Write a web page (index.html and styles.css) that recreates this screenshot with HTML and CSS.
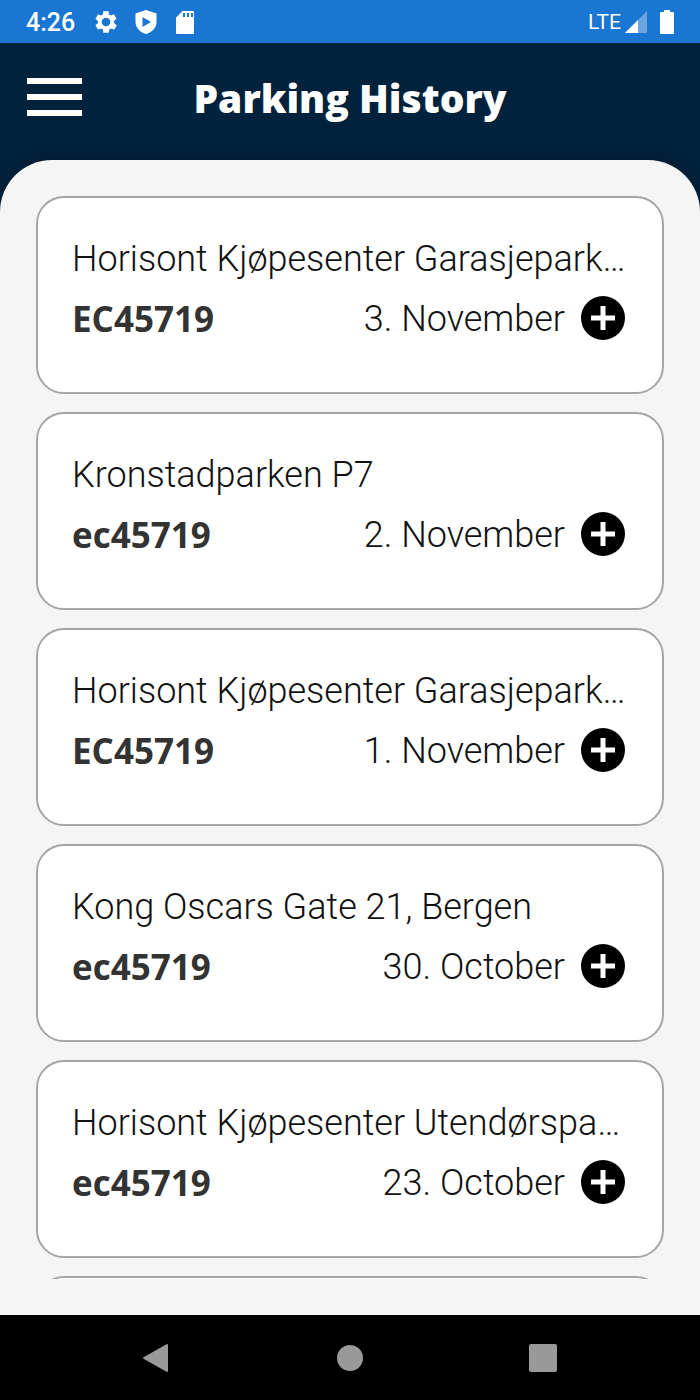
FILE: index.html
```html
<!DOCTYPE html>
<html lang="en">
<head>
  <meta charset="UTF-8">
  <meta name="viewport" content="width=device-width, initial-scale=1">
  <title>Parking History</title>
  <link rel="stylesheet" href="styles.css">
</head>
<body>

  <div class="statusbar">
    <span class="clock">4:26</span>
    <svg class="status-icon" viewBox="1 0 22 24"><path d="M19.4 13a7.500 7.500 0 0 0 0-2l2.100-1.700c.2-.1.2-.4.1-.6l-2-3.500c-.1-.2-.4-.3-.6-.2l-2.500 1a7.300 7.300 0 0 0-1.700-1l-.4-2.600c0-.3-.2-.4-.5-.4h-4c-.2 0-.4.200-.5.400L9.200 5a7.700 7.700 0 0 0-1.700 1L5 5c-.2-.1-.5 0-.6.200l-2 3.500c-.1.200-.1.500.1.600L4.600 11a8 8 0 0 0 0 2l-2.100 1.700c-.2.100-.2.400-.1.600l2 3.500c.1.200.4.300.6.200l2.500-1c.5.400 1.100.7 1.700 1l.4 2.600c0 .3.200.4.500.4h4c.2 0 .4-.200.5-.400l.4-2.600a7.300 7.300 0 0 0 1.700-1l2.500 1c.2.100.5 0 .6-.200l2-3.500c.1-.2.1-.5-.1-.6L19.400 13zM12 16a4 4 0 1 1 0-8 4 4 0 0 1 0 8z" fill="#fff"/></svg>
    <svg class="status-icon" viewBox="0 0 24 26"><path d="M12 1L1.500 4.500V13c0 5.500 4.500 10.300 10.500 12 6-1.700 10.500-6.500 10.500-12V4.500z" fill="#fff"/><path d="M8.500 8v10l8.500-5z" fill="#1976d2"/></svg>
    <svg class="status-icon" viewBox="0 0 24 26"><path d="M8.500 2H19a1 1 0 0 1 1 1v21a1 1 0 0 1-1 1H3a1 1 0 0 1-1-1V8.500z" fill="#fff"/><path d="M9 4h2v4H9zM13 4h2v4h-2zM17 4h2v4h-2z" fill="#1976d2"/></svg>
    <span class="network">LTE</span>
    <svg class="signal-icon" viewBox="0 0 22 22"><path d="M22 0v22H0z" fill="#69a5e1"/><path d="M13 9v13H0z" fill="#fff"/></svg>
    <svg class="battery-icon" viewBox="0 0 14 24"><path d="M4 0h6v2h3a1 1 0 0 1 1 1v20a1 1 0 0 1-1 1H1a1 1 0 0 1-1-1V3a1 1 0 0 1 1-1h3z" fill="#fff"/></svg>
  </div>

  <header>
    <button class="menu" aria-label="Menu"><span></span><span></span><span></span></button>
    <h1>Parking History</h1>
  </header>

  <main>
    <ul class="history">
      <li class="card">
        <h2>Horisont Kjøpesenter Garasjepark…</h2>
        <div class="details">
          <strong>EC45719</strong>
          <span>3. November</span>
          <button class="more" aria-label="Show details"><svg viewBox="0 0 44 44"><circle cx="22" cy="22" r="22"/><path d="M22 10v24M10 22h24"/></svg></button>
        </div>
      </li>
      <li class="card">
        <h2>Kronstadparken P7</h2>
        <div class="details">
          <strong>ec45719</strong>
          <span>2. November</span>
          <button class="more" aria-label="Show details"><svg viewBox="0 0 44 44"><circle cx="22" cy="22" r="22"/><path d="M22 10v24M10 22h24"/></svg></button>
        </div>
      </li>
      <li class="card">
        <h2>Horisont Kjøpesenter Garasjepark…</h2>
        <div class="details">
          <strong>EC45719</strong>
          <span>1. November</span>
          <button class="more" aria-label="Show details"><svg viewBox="0 0 44 44"><circle cx="22" cy="22" r="22"/><path d="M22 10v24M10 22h24"/></svg></button>
        </div>
      </li>
      <li class="card">
        <h2>Kong Oscars Gate 21, Bergen</h2>
        <div class="details">
          <strong>ec45719</strong>
          <span>30. October</span>
          <button class="more" aria-label="Show details"><svg viewBox="0 0 44 44"><circle cx="22" cy="22" r="22"/><path d="M22 10v24M10 22h24"/></svg></button>
        </div>
      </li>
      <li class="card">
        <h2>Horisont Kjøpesenter Utendørspa…</h2>
        <div class="details">
          <strong>ec45719</strong>
          <span>23. October</span>
          <button class="more" aria-label="Show details"><svg viewBox="0 0 44 44"><circle cx="22" cy="22" r="22"/><path d="M22 10v24M10 22h24"/></svg></button>
        </div>
      </li>
      <li class="card"></li>
    </ul>
  </main>

  <nav class="navbar">
    <button aria-label="Back"><svg viewBox="0 0 28 30"><path d="M24 2v26L1 15z" stroke="#999" stroke-width="2" stroke-linejoin="round"/></svg></button>
    <button aria-label="Home"><svg viewBox="0 0 28 30"><circle cx="14" cy="15" r="13"/></svg></button>
    <button aria-label="Recent apps"><svg viewBox="0 0 28 30"><rect y="1" width="28" height="28" rx="2"/></svg></button>
  </nav>

</body>
</html>
```

FILE: styles.css
```css
body {
  margin: 0;
  height: 100vh;
  display: flex;
  flex-direction: column;
  background: #00223d;
  font-family: Roboto, sans-serif;
  color: #111;
}

button {
  border: 0;
  padding: 0;
  background: none;
  cursor: pointer;
}

svg {
  display: block;
}

.statusbar {
  flex: none;
  display: flex;
  align-items: center;
  height: 43px;
  padding: 0 26px;
  box-sizing: border-box;
  background: #1976d2;
  color: #fff;
}

.clock {
  font-size: 25px;
  font-weight: 500;
  line-height: 26px;
  padding-top: 2px;
  margin-right: 3px;
}

.status-icon {
  width: 24px;
  height: 26px;
  margin-left: 16px;
}

.network {
  margin-left: auto;
  font-size: 21px;
}

.signal-icon {
  width: 22px;
  height: 22px;
  margin: 0 13px 0 4px;
}

.battery-icon {
  width: 14px;
  height: 24px;
}

header {
  flex: none;
  display: grid;
  grid-template-columns: 56px 1fr 56px;
  align-items: center;
  height: 117px;
  padding: 0 26px 9px;
  box-sizing: border-box;
}

.menu {
  display: flex;
  flex-direction: column;
  gap: 10px;
}

.menu span {
  width: 55px;
  height: 6px;
  margin-left: 1px;
  background: #fff;
}

h1 {
  margin: 0;
  text-align: center;
  color: #fff;
  font-family: "Open Sans", sans-serif;
  font-size: 39px;
  font-weight: 800;
}

main {
  flex: 1;
  min-height: 0;
  display: flex;
  padding: 36px;
  background: #f5f5f5;
  border-radius: 52px 52px 0 0;
  box-shadow: 0 0 16px rgba(0, 0, 0, 0.3);
}

.history {
  flex: 1;
  min-width: 0;
  display: flex;
  flex-direction: column;
  gap: 18px;
  margin: 0;
  padding: 0;
  list-style: none;
  overflow: hidden;
}

.card {
  flex: none;
  min-height: 198px;
  padding: 37px 37px 0 34px;
  box-sizing: border-box;
  background: #fff;
  border: 2px solid #a3a8a6;
  border-radius: 28px;
}

h2 {
  margin: 0;
  font-size: 36px;
  font-weight: 300;
  line-height: 48px;
  white-space: nowrap;
}

.details {
  display: flex;
  align-items: flex-start;
  margin-top: 12px;
  font-size: 36px;
  font-weight: 300;
  line-height: 48px;
}

.details strong {
  flex: 1;
  font-family: "Open Sans", sans-serif;
  font-size: 35px;
  font-weight: 700;
  color: #333;
}

.more {
  width: 44px;
  height: 44px;
  margin: 1px 0 0 16px;
}

.more path {
  fill: none;
  stroke: #fff;
  stroke-width: 5;
}

.navbar {
  flex: none;
  display: flex;
  justify-content: space-between;
  align-items: center;
  height: 85px;
  padding: 0 143px;
  box-sizing: border-box;
  background: #000;
}

.navbar svg {
  width: 28px;
  height: 30px;
  fill: #999;
}
```
